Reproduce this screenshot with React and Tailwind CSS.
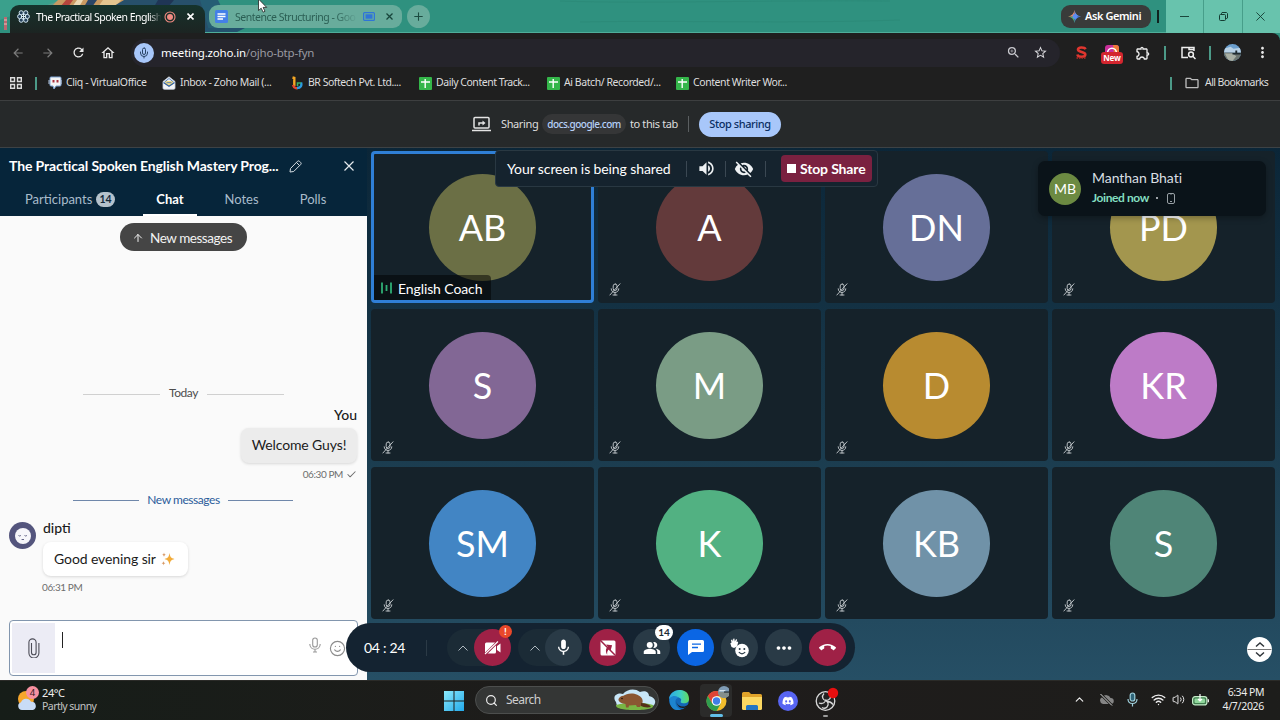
import {
  MdArrowBack,
  MdArrowForward,
  MdCallEnd,
  MdChatBubble,
  MdMic,
  MdMoreHoriz,
  MdMoreVert,
  MdOutlineExtension,
  MdOutlineHome,
  MdOutlineFolder,
  MdPeopleAlt,
  MdRefresh,
  MdStarBorder,
  MdVisibilityOff,
  MdVolumeUp,
  MdZoomIn,
} from "react-icons/md";
import { FaDiscord } from "react-icons/fa";
import { ArrowUp, Check, ChevronUp, Mic, Plus, Search, Smile, Volume2, Wifi, X } from "lucide-react";

const segoe = "font-['Noto_Sans','Open_Sans',sans-serif]";
const lato = "font-['Lato',sans-serif]";

const people = [
  { name: "AB", color: "bg-[#6b6f45]", active: true },
  { name: "A", color: "bg-[#633a3b]" },
  { name: "DN", color: "bg-[#666f98]" },
  { name: "PD", color: "bg-[#a3964e]" },
  { name: "S", color: "bg-[#826795]" },
  { name: "M", color: "bg-[#7a9c85]" },
  { name: "D", color: "bg-[#b88b30]" },
  { name: "KR", color: "bg-[#bd7bc7]" },
  { name: "SM", color: "bg-[#4285c4]" },
  { name: "K", color: "bg-[#52b182]" },
  { name: "KB", color: "bg-[#7092a8]" },
  { name: "S", color: "bg-[#4f8577]" },
];

const bookmarks = [
  { label: "Cliq - VirtualOffice", icon: <CliqIcon />, width: "w-[114px]", track: "tracking-[-0.41px]" },
  { label: "Inbox - Zoho Mail (...", icon: <InboxIcon />, width: "w-[128px]", track: "tracking-[-0.4px]" },
  { label: "BR Softech Pvt. Ltd....", icon: <BrIcon />, width: "w-[128px]", track: "tracking-[-0.48px]" },
  { label: "Daily Content Track...", icon: <SheetIcon />, width: "w-[128px]", track: "tracking-[-0.46px]" },
  { label: "Ai Batch/ Recorded/...", icon: <SheetIcon />, width: "w-[129px]", track: "tracking-[-0.43px]" },
  { label: "Content Writer Wor...", icon: <SheetIcon />, width: "w-[130px]", track: "tracking-[-0.42px]" },
];

function CliqIcon() {
  return (
    <svg width="14" height="14" viewBox="0 0 14 14">
      <path d="M3 1h9a1 1 0 0 1 1 1v7a1 1 0 0 1-1 1H8l-2 3-1-3H3a1 1 0 0 1-1-1V2a1 1 0 0 1 1-1z" fill="#f4f4f4" stroke="#7ea5d6" strokeWidth="1" />
      <path d="M1 4v4M13 4v4" stroke="#b9cbe4" />
      <path d="M4.500 4h2v2.500h-2zM8.500 4h2v2.500h-2z" fill="#a72f3c" />
    </svg>
  );
}

function InboxIcon() {
  return (
    <svg width="14" height="14" viewBox="0 0 14 14">
      <path d="M1 5.500 7 .8l6 4.700V12a1.300 1.300 0 0 1-1.300 1.300H2.300A1.300 1.300 0 0 1 1 12z" fill="#f3f5f8" stroke="#c8d2de" strokeWidth=".8" />
      <path d="M3 5h8v3.500L7 10.500 3 8.500z" fill="#f2dc8a" />
      <path d="M1.500 6.500 7 10.300l5.500-3.800" fill="none" stroke="#2c5fa8" strokeWidth="1.200" />
      <path d="M2.500 6 7 2.500 11.500 6M4.500 6.700h5" stroke="#4a78b5" fill="none" strokeWidth=".9" />
    </svg>
  );
}

function BrIcon() {
  return (
    <svg width="12" height="14" viewBox="0 0 12 14" fill="none" strokeWidth="2.400">
      <path d="M1.500 1.500 3.300 2v8" stroke="#f4a623" />
      <path d="M2 9c1 4 4.500 3.500 5.500 2.500" stroke="#e0452f" />
      <path d="M6 12c4 0 5-2.500 4-5.500" stroke="#2a9be0" />
      <path d="M10 7H6.500v3" stroke="#37b36a" strokeWidth="1.600" />
    </svg>
  );
}

function SheetIcon() {
  return (
    <svg width="13" height="13" viewBox="0 0 13 13">
      <rect width="13" height="13" rx="1" fill="#34b64a" />
      <path d="M6.200 2v9M2 5h9" stroke="#fff" strokeWidth="1.400" />
    </svg>
  );
}

function ZohoTabIcon() {
  return (
    <svg width="13" height="13" viewBox="0 0 13 13" fill="#27425a" stroke="#d5e8f5" strokeWidth="1">
      <circle cx="4.200" cy="2.800" r="2.100" />
      <circle cx="8.800" cy="2.800" r="2.100" />
      <circle cx="2.700" cy="6.500" r="2.100" />
      <circle cx="10.300" cy="6.500" r="2.100" />
      <circle cx="4.200" cy="10.200" r="2.100" />
      <circle cx="8.800" cy="10.200" r="2.100" />
      <path d="M6.500 3v7M4 6.500h5" />
    </svg>
  );
}

function MutedMic() {
  return (
    <svg width="12" height="13" viewBox="0 0 12 13" fill="none" stroke="#c9cfd2" strokeWidth=".9" strokeLinecap="round">
      <rect x="4.200" y="1" width="3.800" height="6.500" rx="1.900" />
      <path d="M2.200 5.800c0 5 7.600 5 7.600 0M6 9.700V12M4 12h4M11 .8.900 12" />
    </svg>
  );
}

function Chevron({ className = "" }) {
  return (
    <svg className={className} width="10" height="6" viewBox="0 0 10 6" fill="none" stroke="#aeb8bf" strokeWidth="1">
      <path d="M.5 5.500 5 1l4.500 4.500" />
    </svg>
  );
}

function Wallpaper() {
  return (
    <svg className="absolute inset-0" width="1280" height="40" viewBox="0 0 1280 40">
      <rect width="1280" height="40" fill="#2f917f" />
      <path d="M0 0h160v5H40L0 20z" fill="#3aa08c" />
      <path d="M60 0h25L50 8H40z" fill="#5a9e8c" />
      <path d="M58 0h80l-10 8H50z" fill="#c99a62" />
      <path d="M66 0h7l-5 7h-8z" fill="#b5453d" />
      <path d="M77 0h6l-4 7h-7z" fill="#ead9b4" />
      <path d="M88 0h9l-5 7h-8z" fill="#2b4566" />
      <path d="M103 0h18l-6 7H98z" fill="#e4c58f" />
      <path d="M124 0h82l6 34h-12l-6-28h-80z" fill="#27506b" />
      <path d="M158 0h16l-6 7h-14z" fill="#1f3555" />
      <path d="M200 0h18l16 34h-24z" fill="#255d74" />
      <path d="M205 28h40l-12 6h-28z" fill="#23536e" />
      <path d="M4 17h3v13H4z" fill="#b76a72" />
      <path d="M4 20h3M4 24h3" stroke="#e5c5bd" />
      <path d="M560 1c80 3 200-1 330 0M580 22c100-2 200 2 320-2" stroke="#2c8b79" fill="none" />
      <path d="M204 32.500h1076" stroke="#4fae9a" />
    </svg>
  );
}

function TabStrip() {
  return (
    <div className="relative h-[33px] shrink-0">
      <Wallpaper />
      <div className="relative flex h-full items-start">
        <div className="ml-[10px] mt-[5px] flex h-[28px] w-[195px] items-center rounded-t-[9px] bg-linear-to-b from-[#15332c] to-[#1c2422] pb-[5px] pl-[7px]">
          <ZohoTabIcon />
          <span className="ml-[6px] w-[128px] whitespace-nowrap text-[10.500px] leading-[18px] tracking-[-0.52px] text-white [mask-image:linear-gradient(to_right,black_88%,transparent_98%)]">
            The Practical Spoken English
          </span>
          <svg width="12" height="12" viewBox="0 0 12 12">
            <circle cx="6" cy="6" r="5" fill="none" stroke="#f28b82" strokeWidth="1.100" />
            <circle cx="6" cy="6" r="3" fill="#f28b82" />
          </svg>
          <svg className="ml-[11px]" width="7" height="7" viewBox="0 0 7 7" stroke="#fff" strokeWidth="1.600">
            <path d="M.5.5l6 6M6.500.5l-6 6" />
          </svg>
        </div>
        <div className="ml-[4px] mt-[5px] flex h-[23px] w-[193px] items-center rounded-[9px] bg-[#68ac9c] pl-[6px]">
          <svg width="13" height="13" viewBox="0 0 13 13">
            <rect width="13" height="13" rx="1.500" fill="#4480e8" />
            <path d="M2.500 4h8M2.500 6.500h8M2.500 9H8" stroke="#fff" strokeWidth="1.300" />
          </svg>
          <span className="ml-[7px] w-[128px] whitespace-nowrap text-[10.500px] leading-[18px] tracking-[-0.48px] text-[#2b5f54] [mask-image:linear-gradient(to_right,black_78%,transparent_96%)]">
            Sentence Structuring - Goo
          </span>
          <svg width="12" height="9" viewBox="0 0 12 9">
            <rect x=".6" y=".6" width="10.800" height="7.800" rx="1" fill="none" stroke="#2f74d8" strokeWidth="1.200" />
            <rect x="2.500" y="2.300" width="7" height="4.400" fill="#2f74d8" />
          </svg>
          <svg className="ml-[11px]" width="7" height="7" viewBox="0 0 7 7" stroke="#17453b" strokeWidth="1.300">
            <path d="M.5.5l6 6M6.500.5l-6 6" />
          </svg>
        </div>
        <div className="ml-[5px] mt-[5px] flex size-[23px] items-center justify-center rounded-full bg-[#68ac9c]">
          <Plus size={13} color="#1c4b40" strokeWidth={2} />
        </div>
        <div className="ml-auto mt-[5px] flex h-[23px] w-[90px] items-center rounded-[9px] bg-[#393b3a] pl-[7px]">
          <svg width="13" height="13" viewBox="0 0 14 14">
            <path d="M7 0c.7 4 3 6.300 7 7H7z" fill="#6c8ff0" />
            <path d="M14 7c-4 .7-6.300 3-7 7V7z" fill="#3f7fee" />
            <path d="M7 14C6.300 10 4 7.700 0 7h7z" fill="#4fae70" />
            <path d="M0 7c4-.7 6.300-3 7-7v7z" fill="#e58a6a" />
            <circle cx="7.500" cy="7" r="2.600" fill="#5b8cf2" />
          </svg>
          <span className="ml-[4px] whitespace-nowrap text-[11px] font-semibold tracking-[-0.43px] text-white">Ask Gemini</span>
        </div>
        <div className="ml-[6px] mt-[10px] h-[13px] w-[2px] bg-[#10231f]" />
        <div className="ml-[7px] flex h-full w-[114px] bg-[#68c3ad]">
          <div className="flex w-[38px] items-center justify-center border-r border-[#479e8a]">
            <div className="h-px w-[9px] bg-[#1b473c]" />
          </div>
          <div className="flex w-[39px] items-center justify-center border-r border-[#479e8a]">
            <svg width="9" height="9" viewBox="0 0 9 9" fill="none" stroke="#143c32">
              <rect x=".5" y="2.500" width="6" height="6" rx="1" />
              <path d="M2.500 2V1.200L3 .5h4.500l1 1V6l-.7.500H7" />
            </svg>
          </div>
          <div className="flex flex-1 items-center justify-center pr-[3px]">
            <svg width="9" height="9" viewBox="0 0 10 10" stroke="#143c32">
              <path d="M.5.5l9 9M9.500.5l-9 9" />
            </svg>
          </div>
        </div>
      </div>
      <svg className="absolute left-[257px] top-[-2px] z-10" width="12" height="16" viewBox="0 0 12 16">
        <path d="M1.500 1v11.500l2.700-2.300 1.900 4 1.900-.9-1.900-3.900h3.600z" fill="#fff" stroke="#222" strokeWidth=".8" />
      </svg>
    </div>
  );
}

function NavRow() {
  return (
    <div className="relative flex h-[39px] items-center rounded-tr-lg bg-[#1f1f1f] pl-[3px]">
      <div className="flex w-[30px] justify-center"><MdArrowBack size={14} color="#7c7c7c" /></div>
      <div className="flex w-[30px] justify-center"><MdArrowForward size={14} color="#7c7c7c" /></div>
      <div className="flex w-[30px] justify-center"><MdRefresh size={15} color="#e8e8e8" /></div>
      <div className="flex w-[30px] justify-center"><MdOutlineHome size={16} color="#e8e8e8" /></div>
      <div className="ml-[8px] flex h-[28px] w-[929px] items-center rounded-full bg-[#25242b] pl-[3px]">
        <div className="flex size-[20px] items-center justify-center rounded-full bg-[#a8c7fa]">
          <Mic size={12} color="#2a4467" strokeWidth={2} />
        </div>
        <span className="ml-[7px] whitespace-nowrap text-[11.500px] tracking-[-0.19px] text-white">
          meeting.zoho.in<span className="text-[#9a9aa2]">/ojho-btp-fyn</span>
        </span>
        <MdZoomIn className="ml-auto" size={15} color="#c9c9ce" />
        <MdStarBorder className="ml-[12px] mr-[12px]" size={15} color="#d8d8dc" />
      </div>
      <div className="flex w-[42px] justify-center pl-[1px]">
        <svg width="13" height="14" viewBox="0 0 13 14" fill="none">
          <path d="M10.500 3.200C9.500 1 3 .8 3 3.600c0 3 7.300 2 7.300 5 0 1.500-1.500 2.200-3.800 2.200S2.700 9.800 2.400 8.500" stroke="#e0362f" strokeWidth="2.600" />
          <path d="M1.500 12h10" stroke="#b52a25" strokeWidth="1.600" strokeDasharray="1.500 1" />
        </svg>
      </div>
      <div className="mr-[10px] mt-[4px] flex h-[20px] w-[20px] flex-col items-center">
        <svg className="shrink-0" width="14" height="9" viewBox="0 0 14 9">
          <path d="M0 9V3a3 3 0 0 1 3-3h8a3 3 0 0 1 3 3v6z" fill="#c92f9a" />
          <path d="M8 0h3a3 3 0 0 1 3 3v6H9z" fill="#ef7a3a" />
          <path d="M2.500 8.500c0-7 9-7 9 0" fill="none" stroke="#fff" strokeWidth="1.600" />
        </svg>
        <span className="mt-[-2px] h-[12px] rounded-[3px] bg-[#d3262f] px-[2px] text-[8px] font-bold leading-[12px] tracking-[-0.2px] text-white">New</span>
      </div>
      <div className="ml-[2px] flex w-[18px] justify-center"><MdOutlineExtension size={16} color="#eee" /></div>
      <div className="ml-[12px] h-[14px] w-[2px] bg-[#4c9a88]" />
      <svg className="ml-[15px]" width="15" height="14" viewBox="0 0 15 14" fill="none" stroke="#eee" strokeWidth="1.500">
        <path d="M7 11.500H1V1.500h12v3.500M8 1.500v2h5" />
        <circle cx="10" cy="8.500" r="2.400" />
        <path d="m11.800 10.300 2.700 2.700" />
      </svg>
      <div className="ml-[13px] h-[14px] w-[2px] bg-[#4c9a88]" />
      <ProfilePhoto />
      <MdMoreVert className="ml-[13px]" size={17} color="#e8e8e8" />
    </div>
  );
}

function ProfilePhoto() {
  return (
    <svg className="ml-[13px]" width="17" height="17" viewBox="0 0 18 18">
      <clipPath id="profile"><circle cx="9" cy="9" r="9" /></clipPath>
      <g clipPath="url(#profile)">
        <rect width="18" height="18" fill="#6b9fce" />
        <path d="M0 5 7 3l3 2 8-1v5H0z" fill="#b9d2e6" />
        <path d="M0 9h18v9H0z" fill="#6c7570" />
        <path d="M1 10h8l4 3-4 5H5z" fill="#a9b0a5" />
        <path d="M12 7h2v4h-2zM9 9.500h9v1.500H9z" fill="#1f2b30" />
      </g>
    </svg>
  );
}

function Bookmarks() {
  return (
    <div className="flex h-[29px] items-center border-b border-[#3d3f40] bg-[#1f1f1f] pb-[6px] pl-[10px] text-[10.500px] text-[#dedede]">
      <svg width="12" height="12" viewBox="0 0 12 12" fill="none" stroke="#ddd" strokeWidth="1.400">
        <path d="M.7.7h3.800v3.800H.7zM7.500.7h3.800v3.800H7.500zM.7 7.500h3.800v3.800H.7zM7.500 7.500h3.800v3.800H7.500z" />
      </svg>
      <div className="ml-[13px] h-[13px] w-[2px] bg-[#4c9a88]" />
      <div className="ml-[11px] flex">
        {bookmarks.map((b) => (
          <div key={b.label} className={`flex items-center whitespace-nowrap ${b.width} ${b.track}`}>
            <span className="mr-[4px] flex w-[14px] shrink-0 justify-center">{b.icon}</span>
            {b.label}
          </div>
        ))}
      </div>
      <div className="ml-auto h-[13px] w-[2px] bg-[#4c9a88]" />
      <MdOutlineFolder className="ml-[12px]" size={16} color="#bdbdbd" />
      <span className="ml-[5px] mr-[12px] w-[63px] whitespace-nowrap tracking-[-0.58px]">All Bookmarks</span>
    </div>
  );
}

function SharingBar() {
  return (
    <div className="flex h-[47px] items-center border-b border-[#3d4245] bg-[#26292a] pl-[472px] text-[11px] text-[#dedede]">
      <svg width="19" height="16" viewBox="0 0 19 16" fill="none" stroke="#e4e4e4" strokeWidth="1.500">
        <rect x="2" y="1.500" width="15" height="10.500" rx="1" />
        <path d="M0 14.500h19" />
        <path d="M7 9.500V7h4" />
        <path d="m10.500 4.500 3 2.500-3 2.500z" fill="#e4e4e4" stroke="none" />
      </svg>
      <span className="ml-[10px] w-[37px] tracking-[-0.38px]">Sharing</span>
      <span className="ml-[4px] flex h-[20px] w-[84px] items-center justify-center rounded-full bg-[#353637] text-[10px] font-medium tracking-[-0.5px] text-[#b6d0f7]">
        docs.google.com
      </span>
      <span className="ml-[4px] w-[48px] whitespace-nowrap tracking-[-0.38px]">to this tab</span>
      <div className="ml-[10px] h-[16px] w-px bg-[#5b5f61]" />
      <button className="ml-[10px] h-[25px] w-[82px] rounded-full bg-[#a8c7fa] text-[11px] font-medium tracking-[-0.42px] text-[#0b2f63]">
        Stop sharing
      </button>
    </div>
  );
}

function Sidebar() {
  return (
    <div className={`flex w-[367px] shrink-0 flex-col ${lato}`}>
      <div className="flex h-[68px] flex-col bg-[#06253a] text-white">
        <div className="flex h-[34px] items-center pl-[9px]">
          <span className="w-[272px] whitespace-nowrap text-[14px] font-bold tracking-[-0.12px]">
            The Practical Spoken English Mastery Prog...
          </span>
          <svg className="ml-[8px] mt-[2px]" width="13" height="13" viewBox="0 0 13 13" fill="none" stroke="#d5dde2">
            <path d="M1 12 1.500 8.500 8.500 1.300a1.500 1.500 0 0 1 2 0l1.200 1.200a1.500 1.500 0 0 1 0 2L4.700 11.500zM7.500 2.500l3 3" />
          </svg>
          <svg className="ml-[42px] mt-[2px]" width="10" height="10" viewBox="0 0 10 10" stroke="#e5eaed" strokeWidth="1.200">
            <path d="M.5.5l9 9M9.500.5l-9 9" />
          </svg>
        </div>
        <div className="flex h-[34px] text-[13px] leading-[34px] text-[#a9bccb]">
          <div className="ml-[25px] flex w-[118px] items-center">
            <span className="w-[71px]">Participants</span>
            <span className="mt-[1px] h-[15px] w-[19px] rounded-full bg-[#b4c2cc] text-center text-[10.500px] font-bold leading-[15px] text-[#12293a]">14</span>
          </div>
          <div className="w-[54px] border-b-2 border-white text-center font-bold text-white">Chat</div>
          <div className="w-[89px] text-center">Notes</div>
          <div className="w-[54px] text-center">Polls</div>
        </div>
      </div>
      <div className="relative flex h-[464px] flex-col bg-[#fafafa] text-[#1b1b1b]">
        <div className="absolute left-[120px] top-[7px] flex h-[28px] w-[127px] items-center rounded-full bg-[#454545] pl-[12px] text-[13.500px] text-[#f2f2f2]">
          <ArrowUp className="mt-[2px]" size={12} strokeWidth={2} />
          <span className="ml-[6px] mt-[2px] whitespace-nowrap tracking-[-0.45px]">New messages</span>
        </div>
        <div className="mt-[169px] flex h-[16px] items-center pl-[83px] text-[12px] text-[#4d4d4d]">
          <div className="mt-[2px] h-px w-[77px] bg-[#d0d0d0]" />
          <span className="w-[47px] text-center tracking-[-0.45px]">Today</span>
          <div className="mt-[2px] h-px w-[77px] bg-[#d0d0d0]" />
        </div>
        <div className="mt-[5px] flex flex-col items-end pr-[10px]">
          <span className="text-[14px] font-medium leading-[18px]">You</span>
          <div className="mt-[4px] h-[35px] w-[116px] rounded-[8px] bg-[#ececec] text-center text-[14px] leading-[34px] tracking-[-0.12px] shadow-[0_1px_3px_rgba(0,0,0,0.14)]">
            Welcome Guys!
          </div>
          <div className="mt-[4px] flex h-[14px] items-center text-[10px] tracking-[-0.4px] text-[#6e6e6e]">
            06:30 PM
            <Check className="ml-[3px]" size={11} strokeWidth={2.200} />
          </div>
        </div>
        <div className="mt-[11px] flex h-[16px] items-center pl-[73px] text-[12px] text-[#2b5c9b]">
          <div className="h-px w-[66px] bg-[#6f87aa]" />
          <span className="w-[89px] text-center tracking-[-0.45px]">New messages</span>
          <div className="h-px w-[65px] bg-[#6f87aa]" />
        </div>
        <div className="mt-[11px] flex pl-[9px]">
          <svg className="mt-[3px]" width="27" height="27" viewBox="0 0 27 27">
            <circle cx="13.500" cy="13.500" r="13.500" fill="#54557d" />
            <circle cx="14" cy="14" r="8" fill="#f6f6fa" />
            <path d="M9.500 13.500q1.200 1 2.400 0M15.500 13.500q1.200 1 2.400 0M12.600 17.500h2.400" stroke="#54557d" fill="none" strokeWidth=".9" />
          </svg>
          <div className="ml-[7px]">
            <div className="text-[14px] font-medium leading-[18px]">dipti</div>
            <div className="mt-[5px] flex h-[34px] w-[145px] items-center rounded-[8px] bg-white pb-[2px] pl-[11px] text-[14px] shadow-[0_1px_3px_rgba(0,0,0,0.14)]">
              <span className="w-[107px] whitespace-nowrap tracking-[-0.1px]">Good evening sir</span>
              <svg className="mt-[2px]" width="14" height="14" viewBox="0 0 14 14">
                <path d="M8.500 1c.7 4 1.500 5 5 6-3.500 1-4.300 2-5 6-.7-4-1.500-5-5-6 3.500-1 4.300-2 5-6z" fill="#f2ac3b" />
                <path d="M3 .5c.3 1.500.6 1.800 2 2.200C3.600 3.100 3.300 3.500 3 5c-.3-1.500-.6-1.900-2-2.300C2.400 2.300 2.700 2 3 .5zM2.500 9c.3 1.500.6 1.800 2 2.200-1.400.4-1.700.8-2 2.300-.3-1.500-.6-1.900-2-2.300 1.400-.4 1.700-.7 2-2.200z" fill="#d89a68" />
              </svg>
            </div>
            <div className="ml-[-1px] mt-[4px] text-[10px] leading-[14px] tracking-[-0.4px] text-[#6e6e6e]">06:31 PM</div>
          </div>
        </div>
        <div className="mx-[9px] mb-[4px] mt-auto flex h-[56px] rounded-[4px] border border-[#8296ae] bg-white p-[2px]">
          <div className="flex w-[43px] items-center justify-center bg-[#ececf5]">
            <svg width="12" height="20" viewBox="0 0 12 20" fill="none" stroke="#4d4d58" strokeWidth="1.100">
              <path d="M3.500 5v9.500a2.300 2.300 0 0 0 4.600 0V4.500A3 3 0 0 0 .9 4.500V15a5 5 0 0 0 10 0V5" />
            </svg>
          </div>
          <div className="ml-[7px] mt-[9px] h-[16px] w-px bg-[#222]" />
          <svg className="ml-auto mr-[8px] mt-[14px]" width="12" height="17" viewBox="0 0 12 17" fill="none" stroke="#999" strokeWidth="1.100">
            <rect x="3.700" y="1" width="4.600" height="9" rx="2.300" />
            <path d="M.8 7c0 7 10.400 7 10.400 0M6 12.500V15M4 15h4" />
          </svg>
          <Smile className="mr-[9px] mt-[17px]" size={17} color="#8b8b8b" strokeWidth={1.600} />
        </div>
      </div>
    </div>
  );
}

function Tile({ person }) {
  return (
    <div className={`relative flex items-center justify-center rounded-[4px] bg-[#15222a] ${person.active ? "border-[3px] border-[#2f7fd6]" : ""}`}>
      <div className={`flex size-[107px] shrink-0 items-center justify-center rounded-full text-[36px] leading-none text-white ${person.color}`}>
        <span className="mt-[-1px]">{person.name}</span>
      </div>
      {person.active ? (
        <div className="absolute bottom-0 left-0 flex h-[25px] w-[117px] items-center rounded-tr-[4px] bg-black/50 pl-[7px] text-[14px] text-white">
          <svg width="11" height="12" viewBox="0 0 11 12" stroke="#2fae74" strokeWidth="1.800">
            <path d="M1 .5v11M5.500 3v6M10 .5v11" />
          </svg>
          <span className="ml-[6px] mt-[1px] whitespace-nowrap tracking-[-0.1px]">English Coach</span>
        </div>
      ) : (
        <div className="absolute bottom-[7px] left-[11px]">
          <MutedMic />
        </div>
      )}
    </div>
  );
}

function ShareBanner() {
  return (
    <div className="absolute left-[495px] top-[2px] flex h-[37px] w-[383px] items-center rounded-[4px] border border-[#293842] bg-[#15232e] pl-[11px] text-[14px] text-white">
      <span className="w-[179px] whitespace-nowrap tracking-[-0.1px]">Your screen is being shared</span>
      <div className="h-[16px] w-px bg-[#3b4853]" />
      <div className="flex w-[38px] justify-center"><MdVolumeUp size={19} color="#eef1f3" /></div>
      <div className="h-[16px] w-px bg-[#3b4853]" />
      <div className="flex w-[39px] justify-center pr-[3px]"><MdVisibilityOff size={20} color="#eef1f3" /></div>
      <div className="h-[16px] w-px bg-[#3b4853]" />
      <button className="ml-[15px] flex h-[27px] w-[91px] items-center rounded-[4px] bg-[#7a2140] pl-[6px] font-bold">
        <span className="size-[9px] bg-white" />
        <span className="ml-[4px] whitespace-nowrap tracking-[-0.15px]">Stop Share</span>
      </button>
    </div>
  );
}

function JoinToast() {
  return (
    <div className="absolute left-[1038px] top-[13px] flex h-[55px] w-[228px] items-center rounded-[7px] bg-[#0a1319] pl-[11px] shadow-[0_2px_6px_rgba(0,0,0,0.3)]">
      <div className="flex size-[32px] items-center justify-center rounded-full bg-[#6c8a42] text-[14px] text-white">MB</div>
      <div className="ml-[11px] mt-[-2px]">
        <div className="text-[14px] leading-[18px] tracking-[-0.05px] text-[#d9dfe3]">Manthan Bhati</div>
        <div className="mt-[3px] flex items-center text-[12px] font-bold leading-[16px] tracking-[-0.4px] text-[#83dfc0]">
          <span className="w-[56px] whitespace-nowrap">Joined now</span>
          <span className="ml-[8px] size-[2px] rounded-full bg-[#cfd5d8]" />
          <svg className="ml-[9px]" width="8" height="11" viewBox="0 0 8 11" fill="none" stroke="#98a0a5">
            <rect x=".5" y=".5" width="7" height="10" rx="1.500" />
            <path d="M3 8.500h2M3 .9h2" />
          </svg>
        </div>
      </div>
    </div>
  );
}

function ControlBar() {
  const round = "relative flex size-[37px] shrink-0 items-center justify-center rounded-full";
  return (
    <div className="absolute left-[346px] top-[475px] flex h-[49px] w-[509px] items-center rounded-full bg-[#142331] pl-[18px] text-white">
      <span className="w-[62px] whitespace-nowrap text-[14px] tracking-[-0.3px]">04 : 24</span>
      <div className="h-[16px] w-px bg-[#2b3a46]" />
      <div className="ml-[20px] flex w-[64px] items-center rounded-full bg-[#1b2b36]">
        <Chevron className="ml-[11px] mr-[6px]" />
        <div className={`${round} bg-[#9f2146]`}>
          <svg width="18" height="14" viewBox="0 0 18 14">
            <path d="M1 3a1.500 1.500 0 0 1 1.500-1.500h8A1.500 1.500 0 0 1 12 3v8a1.500 1.500 0 0 1-1.500 1.500h-8A1.500 1.500 0 0 1 1 11zM13 5l3.500-2.500v9L13 9z" fill="#fff" />
            <path d="M1 13.500 14 .5" stroke="#9f2146" strokeWidth="2.600" />
            <path d="M1 13 14 .5" stroke="#fff" strokeWidth="1.100" />
          </svg>
          <span className="absolute left-[25px] top-[-4px] size-[13px] rounded-full bg-[#e9482a] text-center text-[10px] font-bold leading-[13px]">!</span>
        </div>
      </div>
      <div className="ml-[7px] flex w-[64px] items-center rounded-full bg-[#1b2b36]">
        <Chevron className="ml-[12px] mr-[5px]" />
        <div className={`${round} bg-[#293a46]`}><MdMic size={19} /></div>
      </div>
      <div className={`${round} ml-[7px] bg-[#9f2146]`}>
        <svg width="16" height="16" viewBox="0 0 16 16">
          <rect x=".5" y=".5" width="15" height="15" rx="1.500" fill="#fff" />
          <path d="M3.500 13c.3-4 2.500-6 5-6.200V4.200L13 8l-4.500 3.700V9.500C6.500 9.500 5 10.500 3.500 13z" fill="#9f2146" transform="rotate(-35 8 8)" />
          <path d="M1 1 15 15" stroke="#9f2146" strokeWidth="1.500" />
        </svg>
      </div>
      <div className={`${round} ml-[7px] bg-[#293a46]`}>
        <MdPeopleAlt size={18} />
        <span className="absolute left-[22px] top-[-4px] h-[15px] w-[18px] rounded-full bg-white text-center text-[10px] font-bold leading-[15px] text-[#1b2a35]">14</span>
      </div>
      <div className={`${round} ml-[7px] bg-[#0b66e4]`}>
        <svg width="16" height="15" viewBox="0 0 16 15">
          <path d="M1.500 0h13A1.500 1.500 0 0 1 16 1.500v9a1.500 1.500 0 0 1-1.500 1.500H4l-4 3V1.500A1.500 1.500 0 0 1 1.500 0z" fill="#fff" />
          <path d="M4 4.200h9M4 7.500h6" stroke="#0b66e4" strokeWidth="1.300" />
        </svg>
      </div>
      <div className={`${round} ml-[7px] bg-[#293a46]`}>
        <svg width="19" height="20" viewBox="0 0 19 20">
          <path d="M1.500 9 .3 5.200l1.200-.5L1 2l1.200-.4L3 3.500 3.200.7l1.200-.2.400 3L6 1.200l1.100.4L6.500 4l1-.6.7.8L7 8.500 4 10z" fill="#fff" />
          <circle cx="12" cy="12.500" r="6.800" fill="#fff" />
          <circle cx="9.700" cy="11" r="1" fill="#293a46" />
          <circle cx="14.300" cy="11" r="1" fill="#293a46" />
          <path d="M8.800 14.200q3.200 3.200 6.400 0" stroke="#293a46" strokeWidth="1.200" fill="none" />
        </svg>
      </div>
      <div className={`${round} ml-[7px] bg-[#293a46]`}><MdMoreHoriz size={22} /></div>
      <div className={`${round} ml-[7px] bg-[#9f2146]`}><MdCallEnd size={17} /></div>
    </div>
  );
}

function Meeting() {
  return (
    <div className="relative flex h-[532px] overflow-hidden bg-linear-to-b from-[#0b2638] via-[#19394b] to-[#264f65]">
      <Sidebar />
      <div className={`ml-[4px] mt-[3px] grid h-[468px] w-[904px] grid-cols-4 grid-rows-3 gap-x-[4px] gap-y-[6px] ${lato}`}>
        {people.map((p, i) => (
          <Tile key={i} person={p} />
        ))}
      </div>
      <div className={lato}>
        <ShareBanner />
        <JoinToast />
        <ControlBar />
      </div>
      <div className="absolute left-[1247px] top-[489px] flex size-[25px] items-center justify-center rounded-full bg-white">
        <svg width="25" height="25" viewBox="0 0 25 25" fill="none" stroke="#2d3338" strokeWidth="1.400">
          <path d="M.5 12.500h24" stroke="#777" strokeWidth="1" />
          <path d="m9 9.500 4-3.500 4 3.500M9 15.500l4 3.500 4-3.500" />
        </svg>
      </div>
    </div>
  );
}

function Taskbar() {
  return (
    <div className="flex h-[40px] items-center border-t border-[#2b2b28] bg-linear-to-r from-[#161d18] via-[#1f1c1b] to-[#1d1d1b] text-[#ededed]">
      <svg className="mb-[4px] ml-[17px]" width="23" height="26" viewBox="0 0 23 26">
        <circle cx="9" cy="13" r="8" fill="#f6a62c" />
        <path d="M5 24a4 4 0 0 1-1-7.800 5.500 5.500 0 0 1 10-.5 4.300 4.300 0 0 1 2 8.300z" fill="#c9dcf6" />
        <circle cx="15.500" cy="6.500" r="6.500" fill="#f790a0" />
        <text x="15.500" y="10" textAnchor="middle" fontSize="9.500" fill="#33191d">4</text>
      </svg>
      <div className="mb-[2px] ml-[2px] w-[402px] text-[11px] leading-[13.500px] tracking-[-0.4px]">
        <div>24°C</div>
        <div className="text-[10.500px] tracking-[-0.55px] text-[#c4c4c4]">Partly sunny</div>
      </div>
      <svg width="20" height="20" viewBox="0 0 20 20">
        <linearGradient id="win" x2="1" y2="1"><stop stopColor="#8be9fb" /><stop offset="1" stopColor="#22a9ea" /></linearGradient>
        <path d="M0 0h9.500v9.500H0zM10.500 0H20v9.500h-9.500zM0 10.500h9.500V20H0zM10.500 10.500H20V20h-9.500z" fill="url(#win)" />
      </svg>
      <div className="mb-[1px] ml-[11px] flex h-[28px] w-[184px] items-center rounded-full border border-[#4c4e4d] bg-[#343635] pl-[9px] text-[12px] text-[#cfcfcf]">
        <Search size={13} color="#eee" strokeWidth={2.200} />
        <span className="ml-[8px] w-[107px] tracking-[-0.55px]">Search</span>
        <svg width="43" height="22" viewBox="0 0 43 22">
          <path d="M3 13C-2 6 6 3 10 5 14 0 22-1 27 3c5-2 9 0 9 4 8 2 7 8 4 10H4z" fill="#c8e6f7" />
          <path d="M3 16c10-3 28-3 37 0 2 4-9 5-18 5S2 20 3 16z" fill="#79b544" />
          <path d="M5.500 10c1-2 2.500-3 5-3.200C14 3.500 25 3 29 9.500c2 4-1 7-2 8.500h-3l-1-2-7 .5-.5 2h-2.500l-.5-3.500C9 14.500 5 13 5.500 10z" fill="#8a5632" />
          <path d="M28 14c4 0 8 1 10 4-4 1-8 0-10-1z" fill="#553019" />
          <circle cx="9" cy="9.500" r=".8" fill="#20130b" />
        </svg>
      </div>
      <svg className="mb-[1px] ml-[10px]" width="20" height="20" viewBox="0 0 20 20">
        <linearGradient id="edge" x2="1"><stop stopColor="#2aa6e6" /><stop offset=".6" stopColor="#3fcfc0" /><stop offset="1" stopColor="#63d95a" /></linearGradient>
        <circle cx="10" cy="10" r="10" fill="#1467b8" />
        <path d="M0 9C1-2 20-4 20 9c0 4-4 5-7 4-3-1 0-2-1-4S4 5 0 9z" fill="url(#edge)" />
        <path d="M7.500 11c0 4 4 6 8 5.500l3.500-1.500-1 2c-3 1.500-7 1.500-9-1.500-1.500-2-1.500-3.500-1.500-4.500z" fill="#1c1c1b" />
        <path d="M1 8c3-3 7-2 8.500-.3C7 8 5.500 11 7 15c1 2.500 3 4 5 4.700C4 22-.5 15 1 8z" fill="#1d84d0" />
      </svg>
      <div className="mb-[1px] ml-[11px] flex h-[33px] w-[32px] flex-col items-center justify-end rounded-[4px] bg-[#2b2b2a]">
        <svg width="25" height="25" viewBox="0 0 25 25">
          <circle cx="12.500" cy="15" r="10" fill="#f2bd2c" />
          <path d="M3.800 10A10 10 0 0 1 21.200 10H12.500l-4.300 7.500z" fill="#dd4436" />
          <path d="M3.800 10A10 10 0 0 0 12.500 25l4.300-7.500-8.600 0z" fill="#2f9e4f" />
          <circle cx="12.500" cy="15" r="4.800" fill="#fff" />
          <circle cx="12.500" cy="15" r="3.700" fill="#3f7fe8" />
          <g transform="translate(14 0) scale(.67)">
            <circle cx="9" cy="9" r="9" fill="#7f9cb5" />
            <path d="M0 9h18a9 9 0 0 1-18 0z" fill="#848f8c" />
            <path d="M2 6h9v2H2z" fill="#d2dfe9" />
            <path d="M9 8h8v2H9z" fill="#2c3940" />
          </g>
        </svg>
        <div className="mt-[3px] h-[3px] w-[13px] shrink-0 rounded-full bg-[#62bfe9]" />
      </div>
      <svg className="ml-[10px]" width="20" height="18" viewBox="0 0 20 18">
        <path d="M0 1.500A1.500 1.500 0 0 1 1.500 0H7l2 2h9.500A1.500 1.500 0 0 1 20 3.500V17H0z" fill="#e0a32a" />
        <path d="M0 5h20v11.500a1.500 1.500 0 0 1-1.500 1.500h-17A1.500 1.500 0 0 1 0 16.500z" fill="#fbd862" />
        <path d="M4 18v-3.500A1.500 1.500 0 0 1 5.500 13h9a1.500 1.500 0 0 1 1.500 1.500V18z" fill="#2275c4" />
      </svg>
      <div className="ml-[16px] flex size-[20px] items-center justify-center rounded-full bg-[#5865f2]">
        <FaDiscord size={12} color="#fff" />
      </div>
      <div className="mb-[1px] ml-[17px] flex h-[33px] w-[24px] flex-col justify-end">
        <svg width="24" height="25" viewBox="0 0 24 25" fill="none">
          <circle cx="10.500" cy="14" r="9.300" fill="#222" stroke="#d8d8d8" strokeWidth="1.300" />
          <path d="M9 6.500c-3 3-1 7 2 7 3.500 0 5.500-3 4.500-6M4 16c4 1.500 7-1 6.500-3.500M10.500 13.500c2 .5 4 3.500 1.500 6.500-1.500 1.500-3.500 1.500-5 .5M12.500 14.500c2 0 4 1 5.500 3" stroke="#d8d8d8" strokeWidth="1.300" />
          <circle cx="18" cy="6" r="5.200" fill="#e80f0f" />
        </svg>
        <div className="ml-[8px] mt-[3px] h-[2px] w-[5px] shrink-0 rounded-full bg-[#9a9a9a]" />
      </div>
      <div className="mb-[2px] ml-auto flex items-center">
        <ChevronUp size={13} strokeWidth={2.200} />
        <svg className="ml-[13px]" width="15" height="13" viewBox="0 0 15 13">
          <path d="M4 11a3.500 3.500 0 0 1-.5-6.800A4.500 4.500 0 0 1 11.500 5a3 3 0 0 1 .5 6z" fill="#858585" />
          <path d="M1.500 1 13 12.500" stroke="#1d1d1b" strokeWidth="2.500" />
          <path d="M1.500 1 13 12.500" stroke="#d5d5d5" />
        </svg>
        <svg className="ml-[13px]" width="11" height="15" viewBox="0 0 11 15" fill="none" stroke="#9fd0dc" strokeWidth="1.200">
          <rect x="3.200" y="1" width="4.600" height="8" rx="2.300" fill="#2e6579" />
          <path d="M1 7c0 6 9 6 9 0M5.500 11.500V14.500" />
        </svg>
        <Wifi className="ml-[13px]" size={15} strokeWidth={2.200} />
        <Volume2 className="ml-[6px]" size={13} strokeWidth={1.800} />
        <svg className="ml-[7px]" width="17" height="12" viewBox="0 0 17 12">
          <rect x=".6" y="2.600" width="14.300" height="8.300" rx="2.500" fill="#3f7a4d" stroke="#c4ecc8" strokeWidth="1.200" />
          <rect x="2.500" y="4.500" width="10.500" height="4.500" rx="1" fill="#8fd79b" />
          <path d="M16.300 5.300v3M8 0v6.500M6 5l2 2 2-2" stroke="#fff" strokeWidth="1.200" fill="none" />
        </svg>
        <div className="mr-[16px] w-[55px] whitespace-nowrap text-right text-[10.500px] leading-[13.500px] tracking-[-0.45px]">
          <div>6:34 PM</div>
          <div className="tracking-[-0.3px]">4/7/2026</div>
        </div>
      </div>
    </div>
  );
}

export default function App() {
  return (
    <div className={`flex h-[720px] w-[1280px] flex-col overflow-hidden bg-[#1f1f1f] ${segoe}`}>
      <TabStrip />
      <NavRow />
      <Bookmarks />
      <SharingBar />
      <Meeting />
      <Taskbar />
    </div>
  );
}
